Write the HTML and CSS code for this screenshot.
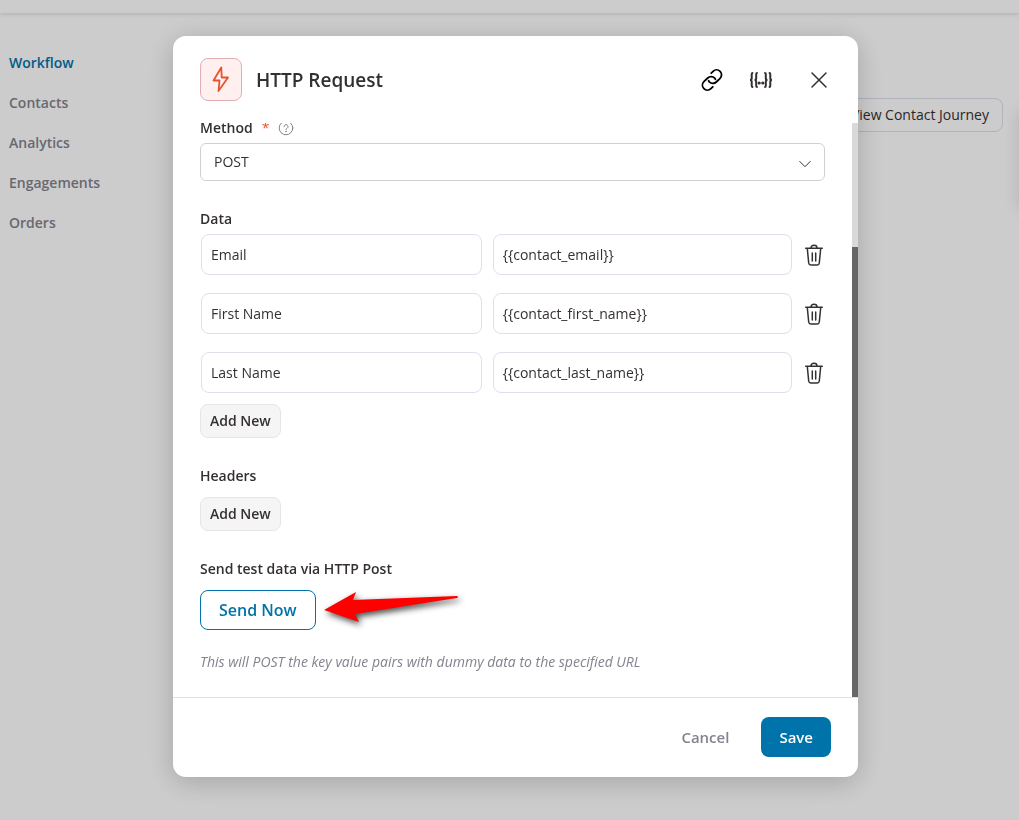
FILE: index.html
```
<!DOCTYPE html>
<html lang="en">
<head>
    <meta charset="UTF-8">
    <meta name="viewport" content="width=device-width, initial-scale=1.0">
    <title>HTTP Request</title>
    <link rel="stylesheet" href="styles.css">
</head>
<body>
    <div class="page">
        <header class="topbar"></header>
        <div class="page-content">
            <nav class="sidebar">
                <a class="active" href="#">Workflow</a>
                <a href="#">Contacts</a>
                <a href="#">Analytics</a>
                <a href="#">Engagements</a>
                <a href="#">Orders</a>
            </nav>
            <main class="canvas">
                <button type="button" class="journey">View Contact Journey</button>
            </main>
        </div>
        <div class="side-panel"></div>
    </div>

    <div class="overlay">
        <form class="modal" onsubmit="return false">
            <div class="modal-header">
                <span class="modal-icon">
                    <svg width="18" height="27" viewBox="0 0 18 27" fill="none" stroke="#e8532f" stroke-width="1.8" stroke-linejoin="round"><path d="M9.300 1.500 1.500 14.500h6l-1 10.500L16 11.500H9.700z"/></svg>
                </span>
                <h1>HTTP Request</h1>
                <div class="modal-actions">
                    <button type="button" aria-label="Link">
                        <svg width="24" height="24" viewBox="0 0 24 24" fill="none" stroke="#000" stroke-width="1.8" stroke-linecap="round"><path d="M11.200 5.200 13.100 3.300a4.900 4.900 0 0 1 7 7L16.300 14a4.900 4.900 0 0 1-7-.2 4.500 4.500 0 0 1-.7-1.100"/><path d="M12.800 18.800l-1.900 1.900a4.900 4.900 0 0 1-7-7L7.700 10a4.900 4.900 0 0 1 7 .2c.3.300.5.700.7 1.100"/></svg>
                    </button>
                    <button type="button" aria-label="Merge tags">
                        <svg width="24" height="18" viewBox="0 0 24 18" fill="none" stroke="#353030" stroke-width="2"><path d="M4.200 2H3.700Q2.700 2 2.700 3.200V7.200Q2.700 9 1 9Q2.700 9 2.700 10.800V14.800Q2.700 16 3.700 16H4.200M8.700 2H8.200Q7.200 2 7.200 3.200V7.200Q7.200 9 5.500 9Q7.200 9 7.200 10.800V14.800Q7.200 16 8.200 16H8.700M15.300 2H15.800Q16.800 2 16.800 3.200V7.200Q16.800 9 18.500 9Q16.800 9 16.800 10.800V14.800Q16.800 16 15.800 16H15.300M19.800 2H20.300Q21.300 2 21.300 3.200V7.200Q21.300 9 23 9Q21.300 9 21.300 10.800V14.800Q21.300 16 20.300 16H19.800"/><g fill="#353030" stroke="none"><circle cx="10.200" cy="12" r="1.600"/><circle cx="13.800" cy="12" r="1.600"/></g></svg>
                    </button>
                    <button type="button" class="close" aria-label="Close">
                        <svg width="18" height="18" viewBox="0 0 18 18" fill="none" stroke="#353030" stroke-width="1.500" stroke-linecap="round"><path d="M2 2l14 14M16 2 2 16"/></svg>
                    </button>
                </div>
            </div>

            <div class="modal-body">
                <div class="fields">
                    <div class="field">
                        <div class="label-row">
                            <label for="method">Method</label>
                            <span class="required">*</span>
                            <svg width="16" height="16" viewBox="0 0 16 16" fill="none" stroke="#82838e" stroke-width="1" stroke-linecap="round"><circle cx="8" cy="8" r="6.800"/><path d="M6 6.500a2 2 0 1 1 3.100 1.700C8.300 8.700 8 9 8 9.700"/><circle cx="8" cy="11.500" r=".3"/></svg>
                        </div>
                        <div class="select-wrap">
                            <select id="method">
                                <option>POST</option>
                                <option>GET</option>
                                <option>PUT</option>
                                <option>DELETE</option>
                            </select>
                            <svg class="chevron" width="14" height="8" viewBox="0 0 14 8" fill="none" stroke="#353030"><path d="M1.500 1.200 7 6.700l5.500-5.500"/></svg>
                        </div>
                    </div>

                    <div class="field">
                        <h2>Data</h2>
                        <div class="rows">
                            <div class="row">
                                <input class="key" type="text" value="Email" aria-label="Key">
                                <input class="value" type="text" value="{{contact_email}}" aria-label="Value">
                                <button type="button" class="trash" aria-label="Delete">
                                    <svg width="22" height="24" viewBox="0 0 22 24" fill="none" stroke="#353030" stroke-width="1.500" stroke-linecap="round"><path d="M2.700 5.200h16.600M4.300 5.500l1.400 14.500q.3 2 2 2h6.600q1.700 0 2-2l1.400-14.500M8 5q0-2.700 3-2.700t3 2.700M9.300 10v8M12.700 10v8"/></svg>
                                </button>
                            </div>
                            <div class="row">
                                <input class="key" type="text" value="First Name" aria-label="Key">
                                <input class="value" type="text" value="{{contact_first_name}}" aria-label="Value">
                                <button type="button" class="trash" aria-label="Delete">
                                    <svg width="22" height="24" viewBox="0 0 22 24" fill="none" stroke="#353030" stroke-width="1.500" stroke-linecap="round"><path d="M2.700 5.200h16.600M4.300 5.500l1.400 14.500q.3 2 2 2h6.600q1.700 0 2-2l1.400-14.500M8 5q0-2.700 3-2.700t3 2.700M9.300 10v8M12.700 10v8"/></svg>
                                </button>
                            </div>
                            <div class="row">
                                <input class="key" type="text" value="Last Name" aria-label="Key">
                                <input class="value" type="text" value="{{contact_last_name}}" aria-label="Value">
                                <button type="button" class="trash" aria-label="Delete">
                                    <svg width="22" height="24" viewBox="0 0 22 24" fill="none" stroke="#353030" stroke-width="1.500" stroke-linecap="round"><path d="M2.700 5.200h16.600M4.300 5.500l1.400 14.500q.3 2 2 2h6.600q1.700 0 2-2l1.400-14.500M8 5q0-2.700 3-2.700t3 2.700M9.300 10v8M12.700 10v8"/></svg>
                                </button>
                            </div>
                        </div>
                        <button type="button" class="add">Add New</button>
                    </div>

                    <div class="field">
                        <h2>Headers</h2>
                        <button type="button" class="add">Add New</button>
                    </div>

                    <div class="field">
                        <h2>Send test data via HTTP Post</h2>
                        <div class="send-row">
                            <button type="button" class="send">Send Now</button>
                            <svg class="arrow" width="150" height="48" viewBox="0 0 150 48"><path fill="#f00" d="M8 26 40 8l-3 8 104-4q2 1 0 2L39 30l4 8z"/></svg>
                        </div>
                        <p class="hint">This will POST the key value pairs with dummy data to the specified URL</p>
                    </div>
                </div>
                <div class="scrollbar"><div class="thumb"></div></div>
            </div>

            <div class="modal-footer">
                <button type="button" class="cancel">Cancel</button>
                <button type="submit" class="save">Save</button>
            </div>
        </form>
    </div>
</body>
</html>
```
FILE: styles.css
```
* {
    box-sizing: border-box;
}
body {
    margin: 0;
    font-family: "Open Sans", "Noto Sans", sans-serif;
    font-size: 14px;
    line-height: 20px;
    color: #353030;
    background-color: #fff;
}
h1, h2, p {
    margin: 0;
}
button {
    padding: 0;
    font: inherit;
    color: inherit;
    background: none;
    border: none;
    cursor: pointer;
}
svg {
    display: block;
}

/* page behind the modal */
.page {
    position: relative;
    height: 100vh;
    overflow: hidden;
}
.topbar {
    height: 13px;
    box-shadow: 0 1px 5px rgba(0, 0, 0, 0.15);
}
.page-content {
    display: flex;
    justify-content: space-between;
    padding: 40px 16px 0 9px;
}
.sidebar {
    display: flex;
    flex-direction: column;
    gap: 20px;
}
.sidebar a {
    font-weight: 600;
    color: #82838e;
    text-decoration: none;
}
.sidebar .active {
    color: #0073aa;
}
.canvas {
    padding-top: 45px;
}
.journey {
    height: 34px;
    padding: 0 13px;
    border: 1px solid #dedfea;
    border-radius: 8px;
}
.side-panel {
    position: absolute;
    top: 110px;
    left: 100%;
    width: 40px;
    height: 100px;
    box-shadow: 0 0 16px rgba(0, 0, 0, 0.12);
}

/* modal */
.overlay {
    position: fixed;
    inset: 0;
    display: flex;
    justify-content: center;
    padding: 36px 12px 43px;
    background-color: rgba(0, 0, 0, 0.2);
}
.modal {
    display: flex;
    flex-direction: column;
    width: 100%;
    max-width: 685px;
    margin-left: 12px;
    background-color: #fff;
    border-radius: 13px;
    box-shadow: 0 5px 28px rgba(0, 0, 0, 0.2);
    overflow: hidden;
}
.modal-header {
    display: flex;
    align-items: center;
    gap: 14px;
    padding: 22px 30px 22px 27px;
}
.modal-icon {
    display: flex;
    align-items: center;
    justify-content: center;
    width: 42px;
    height: 43px;
    background-color: #fff0ef;
    border: 1px solid #dfb0b3;
    border-radius: 8px;
}
.modal-header h1 {
    font-size: 19px;
    font-weight: 600;
    line-height: 28px;
}
.modal-actions {
    display: flex;
    align-items: center;
    gap: 25px;
    margin-left: auto;
}
.modal-actions .close {
    margin-left: 12px;
}
.modal-body {
    display: flex;
    flex: 1;
    min-height: 0;
    overflow: hidden;
}
.fields {
    display: flex;
    flex: 1;
    flex-direction: column;
    justify-content: flex-end;
    gap: 28px;
    padding: 0 27px 25px;
}
.scrollbar {
    display: flex;
    align-items: flex-end;
    width: 6px;
    background-color: #d9d9d9;
}
.thumb {
    width: 100%;
    height: 78.4%;
    background-color: #666;
}
.label-row {
    display: flex;
    align-items: center;
    margin-bottom: 5px;
}
.label-row label {
    font-weight: 600;
}
.required {
    margin: 0 9px;
    color: #e8532f;
}
.select-wrap {
    position: relative;
}
.select-wrap select {
    display: block;
    width: 100%;
    height: 38px;
    padding: 0 13px;
    font: inherit;
    color: inherit;
    background-color: #fff;
    border: 1px solid #ced0d4;
    border-radius: 6px;
    appearance: none;
}
.chevron {
    position: absolute;
    top: 17px;
    right: 13px;
    pointer-events: none;
}
.field h2 {
    margin-bottom: 11px;
    font-size: 14px;
    font-weight: 600;
    line-height: 20px;
}
.rows {
    display: flex;
    flex-direction: column;
    gap: 18px;
    margin: -6px 0 11px 1px;
}
.row {
    display: flex;
    align-items: center;
    gap: 11px;
}
.row input {
    min-width: 0;
    height: 41px;
    padding: 0 9px;
    font: inherit;
    color: inherit;
    border: 1px solid #dedfea;
    border-radius: 8px;
}
.row .key {
    flex: 280 1 0;
}
.row .value {
    flex: 300 1 0;
}
.add {
    height: 34px;
    padding: 0 9px;
    font-weight: 600;
    background-color: #f5f5f5;
    border: 1px solid #e5e5e5;
    border-radius: 8px;
}
.send-row {
    position: relative;
    display: flex;
}
.send {
    height: 40px;
    padding: 0 18px;
    font-size: 16px;
    font-weight: 600;
    color: #0073aa;
    border: 1px solid #0073aa;
    border-radius: 8px;
}
.arrow {
    position: absolute;
    top: -6px;
    left: 116px;
    overflow: visible;
    filter: drop-shadow(2px 3px 3px rgba(0, 0, 0, 0.7));
}
.hint {
    margin-top: 22px;
    font-style: italic;
    color: #82838e;
}
.modal-footer {
    display: flex;
    justify-content: flex-end;
    gap: 32px;
    padding: 19px 27px 20px;
    font-size: 15px;
    border-top: 1px solid #dedfea;
}
.cancel {
    font-weight: 600;
    color: #82838e;
}
.save {
    height: 40px;
    padding: 0 18px;
    font-weight: 600;
    color: #fff;
    background-color: #0073aa;
    border-radius: 8px;
}
```
